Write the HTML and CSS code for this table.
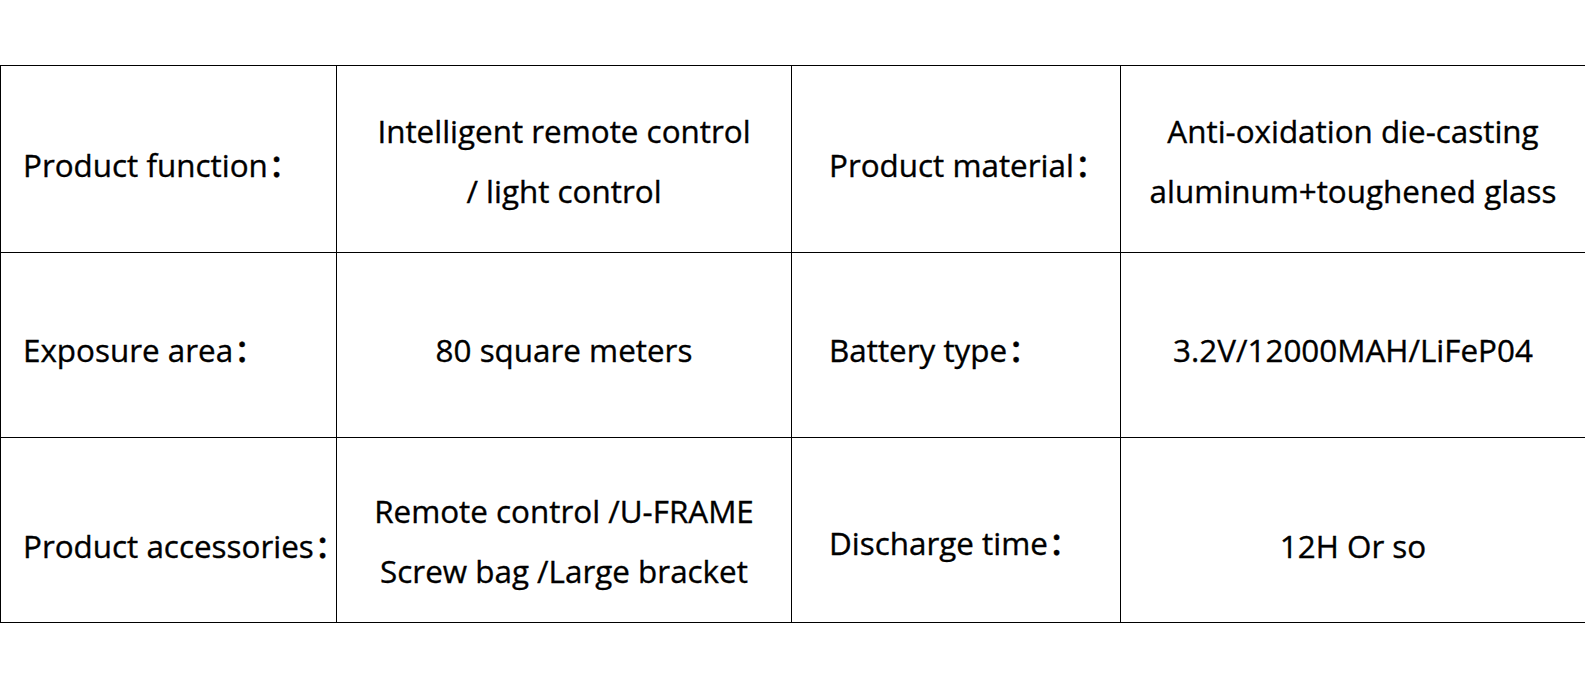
FILE: index.html
```html
<!DOCTYPE html>
<html>
<head>
<meta charset="utf-8">
<link rel="stylesheet" href="styles.css">
</head>
<body>
<div class="page">
<table class="spec">
<colgroup>
<col class="c1"><col class="c2"><col class="c3"><col class="c4">
</colgroup>
<tr class="r1">
<td class="label l1">Product function<span class="colon">：</span></td>
<td class="value">Intelligent remote control<br>/ light control</td>
<td class="label l3">Product material<span class="colon">：</span></td>
<td class="value">Anti-oxidation die-casting<br>aluminum+toughened glass</td>
</tr>
<tr class="r2">
<td class="label l1">Exposure area<span class="colon">：</span></td>
<td class="value">80 square meters</td>
<td class="label l3">Battery type<span class="colon">：</span></td>
<td class="value">3.2V/12000MAH/LiFeP04</td>
</tr>
<tr class="r3">
<td class="label l1">Product accessories<span class="colon">：</span></td>
<td class="value">Remote control /U-FRAME<br>Screw bag /Large bracket</td>
<td class="label l3 raised">Discharge time<span class="colon">：</span></td>
<td class="value single">12H Or so</td>
</tr>
</table>
</div>
</body>
</html>
```
FILE: styles.css
```css
html, body {
  margin: 0;
  padding: 0;
  background: #ffffff;
}
.page {
  padding-top: 65px;
}
.spec {
  border-collapse: collapse;
  table-layout: fixed;
  width: 1585px;
  font-family: "Open Sans", "Noto Sans CJK SC", sans-serif;
  font-size: 31.4px;
  font-weight: 500;
  line-height: 60px;
  color: #000;
  -webkit-text-stroke: 0.35px #000;
}
.c1 { width: 336px; }
.c2 { width: 455px; }
.c3 { width: 329px; }
.c4 { width: 465px; }
.spec td {
  border: 1.5px solid #000;
  box-sizing: border-box;
  vertical-align: middle;
  white-space: nowrap;
  padding-right: 0;
  padding-bottom: 0;
}
.r1 td { height: 187px; }
.r2 td, .r3 td { height: 185px; }
.r1 .label { padding-top: 12px; }
.r1 .value { padding-top: 4px; }
.r2 td { padding-top: 10px; }
.r3 .label { padding-top: 32px; }
.r3 .value { padding-top: 22px; }
.r3 .value.single { padding-top: 32px; }
.r3 .label.raised { padding-top: 26px; }
.label { text-align: left; }
.l1 { padding-left: 22px; }
.l3 { padding-left: 37px; }
.value { text-align: center; padding-left: 0; }
.colon { margin-left: 1px; }
```
